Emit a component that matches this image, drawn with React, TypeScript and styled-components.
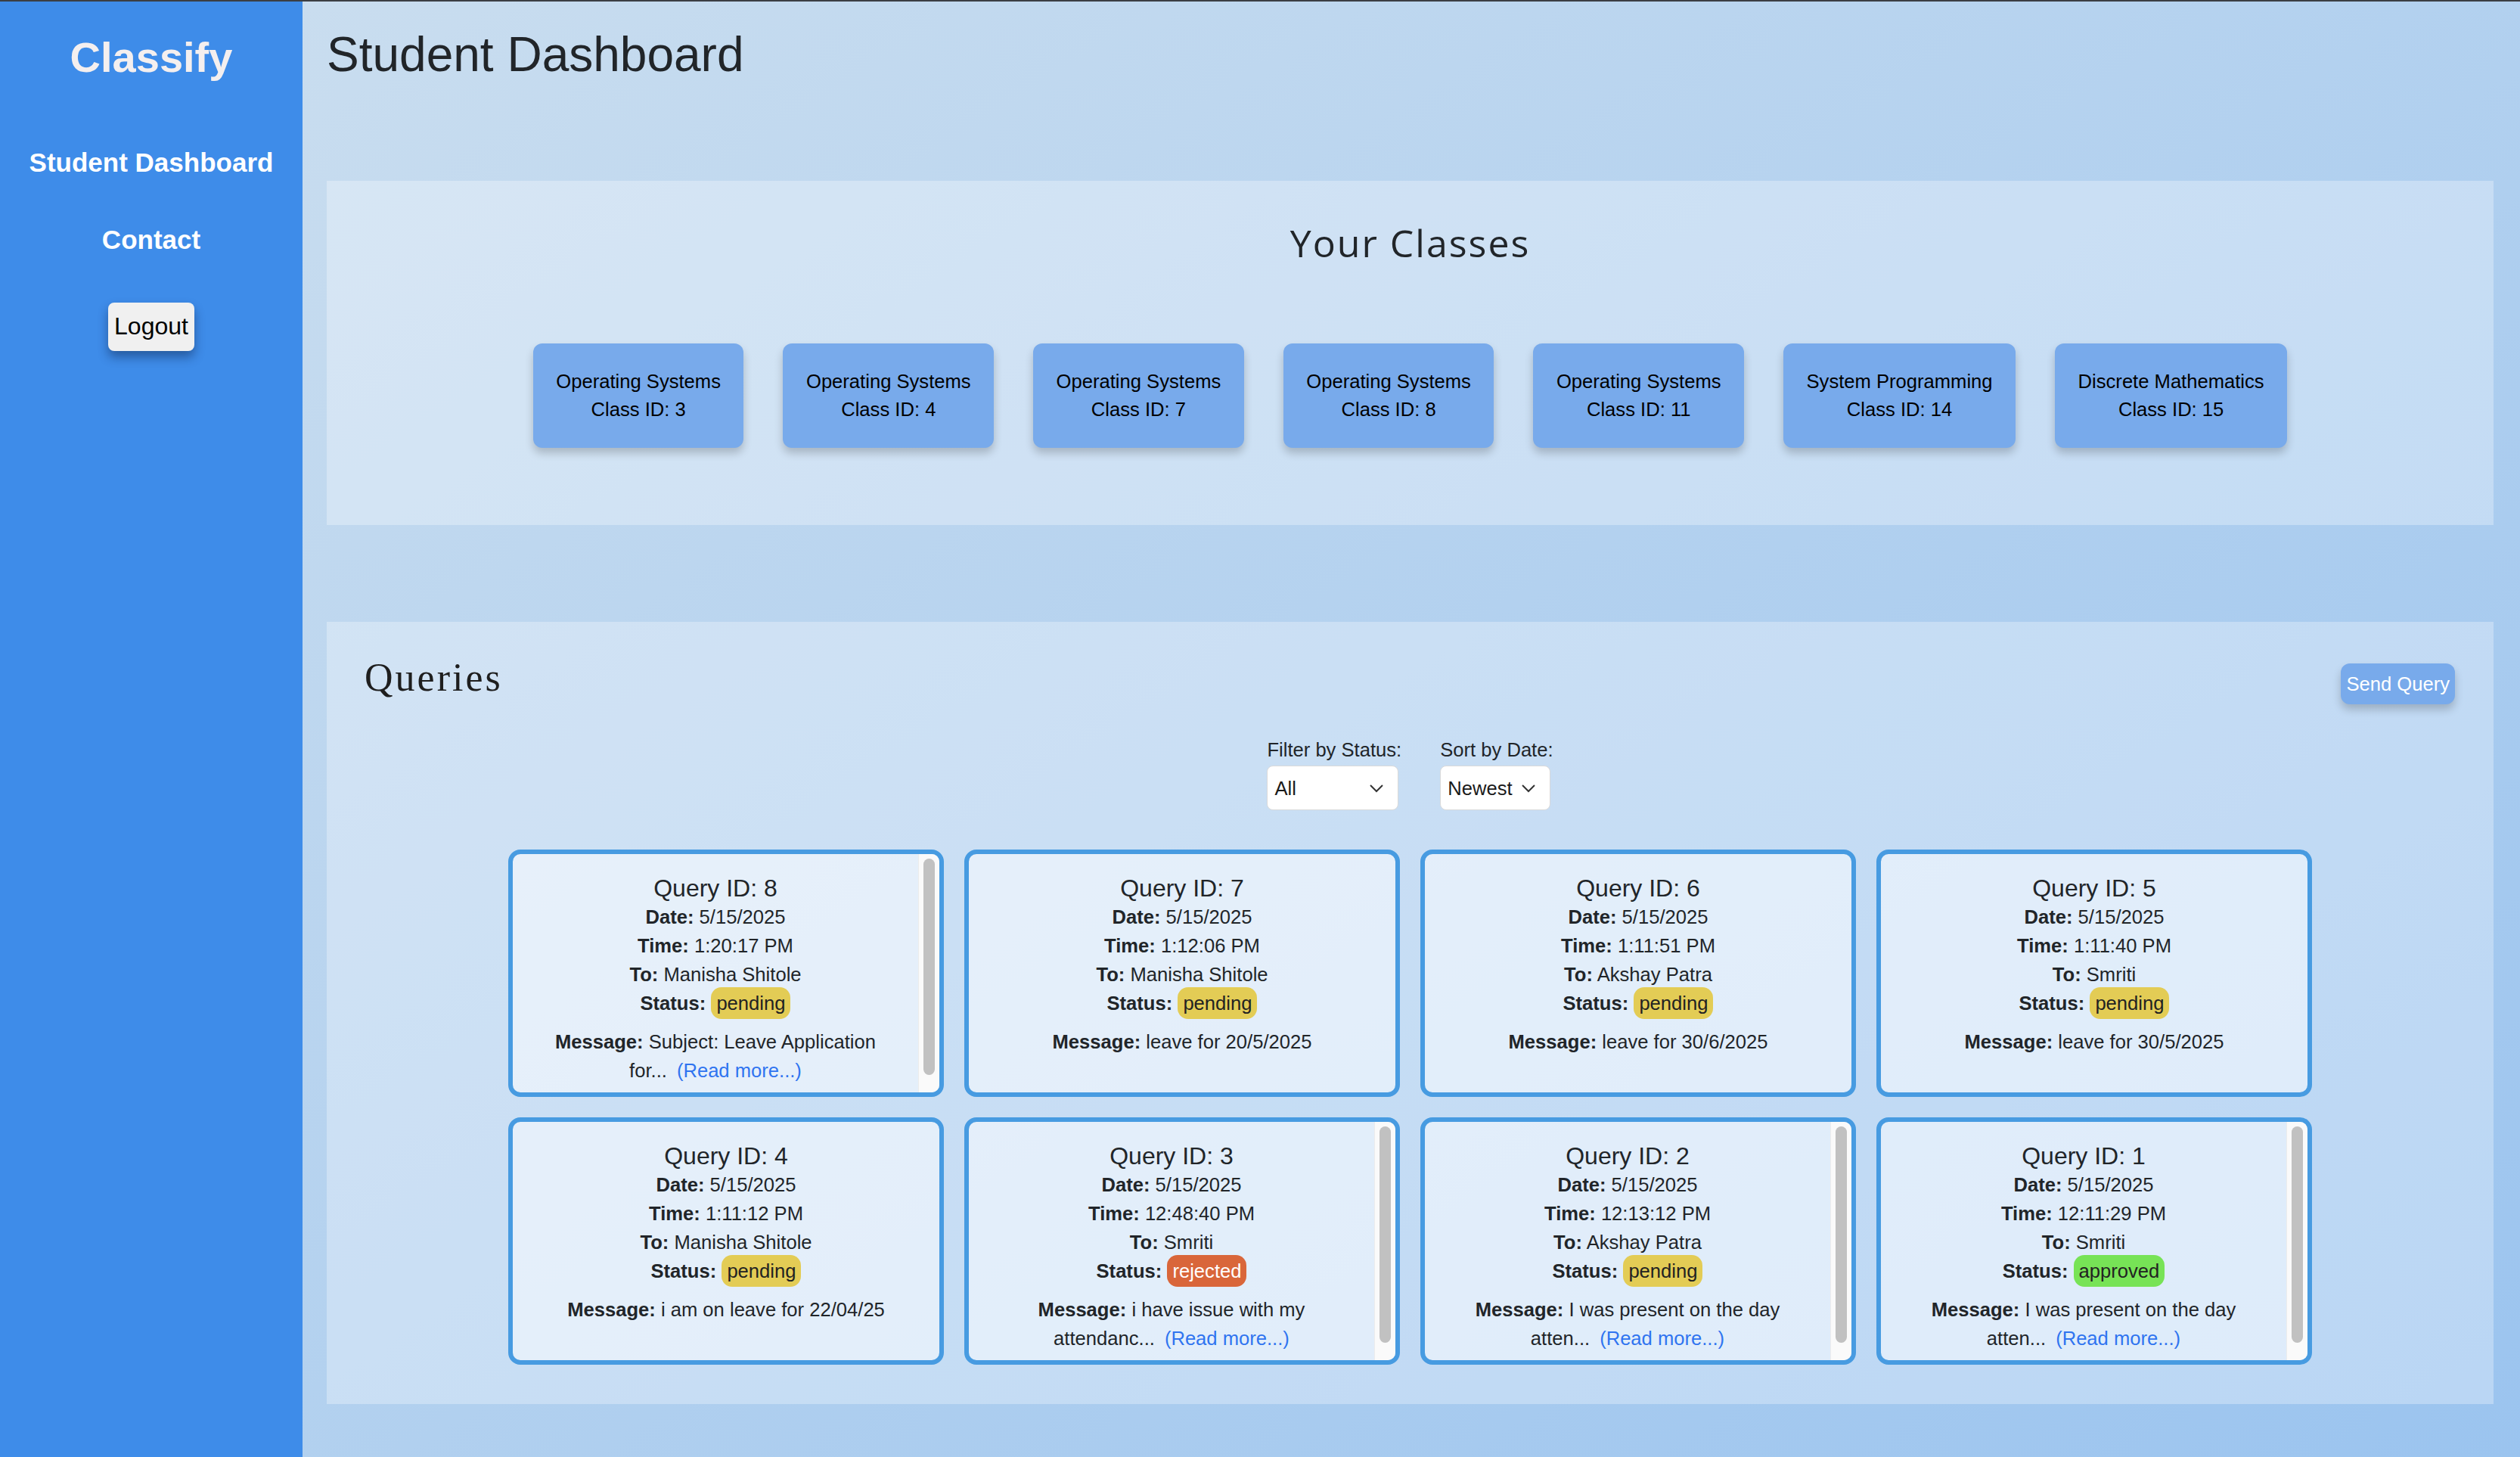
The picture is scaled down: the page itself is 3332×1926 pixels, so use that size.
import styled, { createGlobalStyle } from 'styled-components'

const GlobalStyle = createGlobalStyle`
  html, body {
    margin: 0;
    padding: 0;
  }
  body {
    font-family: "Liberation Sans", Arial, sans-serif;
    color: #212529;
  }
  * {
    box-sizing: border-box;
  }
`

const Layout = styled.div`
  display: flex;
  min-height: 100vh;
  border-top: 2px solid #3b3e43;
`

const Sidebar = styled.nav`
  width: 400px;
  flex-shrink: 0;
  background: #3e8ce9;
  display: flex;
  flex-direction: column;
  align-items: center;
  padding-top: 42px;
`

const Logo = styled.div`
  font-size: 56px;
  font-weight: 700;
  color: #f4efef;
  line-height: 64px;
  margin-bottom: 87px;
`

const NavLink = styled.a`
  font-size: 35px;
  font-weight: 700;
  color: #ffffff;
  line-height: 40px;
  margin-bottom: 62px;
  text-decoration: none;
  cursor: pointer;
`

const LogoutButton = styled.button`
  font-family: inherit;
  font-size: 32px;
  line-height: 37px;
  padding: 13px 8px 14px;
  background: #f0f0f0;
  color: #000;
  border: none;
  border-radius: 8px;
  box-shadow: 0 8px 14px rgba(10, 30, 70, 0.45);
  margin-top: 1px;
`

const Main = styled.main`
  flex: 1;
  background: linear-gradient(to bottom right, #c9ddef, #9bc4ef);
  padding: 33px 35px 40px 32px;
`

const PageTitle = styled.h1`
  font-size: 64px;
  font-weight: 400;
  line-height: 74px;
  margin: 0 0 130px;
  color: #212529;
`

const Panel = styled.section`
  background: rgba(255, 255, 255, 0.3);
`

const ClassesPanel = styled(Panel)`
  padding: 52px 50px 102px;
  margin-bottom: 128px;
`

const ClassesTitle = styled.h2`
  font-family: "Open Sans", sans-serif;
  font-size: 50px;
  font-weight: 400;
  letter-spacing: 2px;
  line-height: 60px;
  text-align: center;
  margin: 0 0 103px;
  color: #212529;
`

const ClassRow = styled.div`
  display: flex;
  justify-content: center;
  gap: 52px;
`

const ClassCard = styled.div`
  background: #78aaeb;
  border-radius: 12px;
  padding: 32px 30.5px;
  font-size: 25.6px;
  line-height: 37px;
  text-align: center;
  color: #000;
  box-shadow: 0 7px 12px rgba(0, 0, 0, 0.2);
  cursor: pointer;
`

const QueriesPanel = styled(Panel)`
  padding: 55px 50px 52px;
`

const QueriesHeader = styled.div`
  display: flex;
  justify-content: space-between;
  align-items: flex-start;
`

const QueriesTitle = styled.h2`
  font-family: "Liberation Serif", serif;
  font-size: 52px;
  font-weight: 400;
  letter-spacing: 3px;
  line-height: 38px;
  margin: 0;
  color: #1e1e1e;
`

const SendButton = styled.button`
  font-family: inherit;
  font-size: 25.6px;
  line-height: 30px;
  padding: 12px 7px;
  background: #78aaeb;
  color: #fff;
  border: none;
  border-radius: 12px;
  box-shadow: 0 7px 12px rgba(0, 0, 0, 0.2);
  margin-right: 1px;
`

const Filters = styled.div`
  display: flex;
  justify-content: center;
  gap: 51px;
  margin-top: 46px;
`

const FilterGroup = styled.label`
  display: flex;
  flex-direction: column;
  gap: 6px;
  font-size: 25.6px;
  color: #212529;
`

const SelectWrap = styled.div<{ $width: number }>`
  position: relative;
  width: ${props => props.$width}px;
`

const Select = styled.select`
  appearance: none;
  width: 100%;
  height: 59px;
  padding: 0 0 0 9px;
  font-family: inherit;
  font-size: 25.6px;
  color: #1a1a1a;
  background: #fff;
  border: 1px solid #d9d9d9;
  border-radius: 8px;
`

const Chevron = styled.svg`
  position: absolute;
  right: 19px;
  top: 24px;
  pointer-events: none;
`

const QueryGrid = styled.div`
  display: grid;
  grid-template-columns: repeat(4, 576px);
  gap: 27px;
  justify-content: center;
  margin-top: 52px;
`

const QueryCard = styled.article`
  display: flex;
  height: 327px;
  border: 6px solid #479be1;
  border-radius: 16px;
  background: rgba(255, 255, 255, 0.5);
  overflow: hidden;
  text-align: center;
  color: #212529;
`

const CardBody = styled.div`
  flex: 1;
  min-width: 0;
  overflow: hidden;
  padding: 26px 45px 26px;
`

const ScrollTrack = styled.div`
  width: 28px;
  flex-shrink: 0;
  background: #fafafa;
  border-left: 1px solid #ececec;
  padding: 6px 6px 0;
`

const ScrollThumb = styled.div`
  height: 286px;
  background: #c1c1c1;
  border-radius: 8px;
`

const QueryTitle = styled.h3`
  font-size: 32px;
  font-weight: 400;
  line-height: 38px;
  margin: 0;
`

const InfoLine = styled.p`
  font-size: 25.6px;
  line-height: 38px;
  margin: 0;
`

const MessageLine = styled(InfoLine)`
  margin-top: 13px;
`

const badgeColors: Record<string, { bg: string, fg: string }> = {
  pending: { bg: '#e3cc55', fg: '#222' },
  rejected: { bg: '#d9663a', fg: '#fff' },
  approved: { bg: '#77e356', fg: '#222' },
}

const Badge = styled.span<{ $status: string }>`
  padding: 7px 7px;
  border-radius: 14px;
  background: ${props => badgeColors[props.$status].bg};
  color: ${props => badgeColors[props.$status].fg};
`

const ReadMore = styled.a`
  color: #2f74f0;
  margin-left: 13px;
  cursor: pointer;
`

const classes = [
  { name: 'Operating Systems', id: 3 },
  { name: 'Operating Systems', id: 4 },
  { name: 'Operating Systems', id: 7 },
  { name: 'Operating Systems', id: 8 },
  { name: 'Operating Systems', id: 11 },
  { name: 'System Programming', id: 14 },
  { name: 'Discrete Mathematics', id: 15 },
]

type Query = {
  id: number
  time: string
  to: string
  status: string
  message: string
  more?: boolean
}

const queries: Query[] = [
  { id: 8, time: '1:20:17 PM', to: 'Manisha Shitole', status: 'pending', message: 'Subject: Leave Application for...', more: true },
  { id: 7, time: '1:12:06 PM', to: 'Manisha Shitole', status: 'pending', message: 'leave for 20/5/2025' },
  { id: 6, time: '1:11:51 PM', to: 'Akshay Patra', status: 'pending', message: 'leave for 30/6/2025' },
  { id: 5, time: '1:11:40 PM', to: 'Smriti', status: 'pending', message: 'leave for 30/5/2025' },
  { id: 4, time: '1:11:12 PM', to: 'Manisha Shitole', status: 'pending', message: 'i am on leave for 22/04/25' },
  { id: 3, time: '12:48:40 PM', to: 'Smriti', status: 'rejected', message: 'i have issue with my attendanc...', more: true },
  { id: 2, time: '12:13:12 PM', to: 'Akshay Patra', status: 'pending', message: 'I was present on the day atten...', more: true },
  { id: 1, time: '12:11:29 PM', to: 'Smriti', status: 'approved', message: 'I was present on the day atten...', more: true },
]

const ChevronIcon = () => (
  <Chevron width="20" height="12" viewBox="0 0 20 12">
    <polyline points="2,2 10,10 18,2" fill="none" stroke="#333" strokeWidth="2" />
  </Chevron>
)

const App = (): JSX.Element => (
  <>
    <GlobalStyle />
    <Layout>
      <Sidebar>
        <Logo>Classify</Logo>
        <NavLink>Student Dashboard</NavLink>
        <NavLink>Contact</NavLink>
        <LogoutButton>Logout</LogoutButton>
      </Sidebar>
      <Main>
        <PageTitle>Student Dashboard</PageTitle>
        <ClassesPanel>
          <ClassesTitle>Your Classes</ClassesTitle>
          <ClassRow>
            {classes.map(c => (
              <ClassCard key={c.id}>
                {c.name}
                <br />
                Class ID: {c.id}
              </ClassCard>
            ))}
          </ClassRow>
        </ClassesPanel>
        <QueriesPanel>
          <QueriesHeader>
            <QueriesTitle>Queries</QueriesTitle>
            <SendButton>Send Query</SendButton>
          </QueriesHeader>
          <Filters>
            <FilterGroup>
              Filter by Status:
              <SelectWrap $width={174}>
                <Select defaultValue="all">
                  <option value="all">All</option>
                  <option value="pending">Pending</option>
                  <option value="approved">Approved</option>
                  <option value="rejected">Rejected</option>
                </Select>
                <ChevronIcon />
              </SelectWrap>
            </FilterGroup>
            <FilterGroup>
              Sort by Date:
              <SelectWrap $width={146}>
                <Select defaultValue="newest">
                  <option value="newest">Newest</option>
                  <option value="oldest">Oldest</option>
                </Select>
                <ChevronIcon />
              </SelectWrap>
            </FilterGroup>
          </Filters>
          <QueryGrid>
            {queries.map(q => (
              <QueryCard key={q.id}>
                <CardBody>
                  <QueryTitle>Query ID: {q.id}</QueryTitle>
                  <InfoLine><strong>Date:</strong> 5/15/2025</InfoLine>
                  <InfoLine><strong>Time:</strong> {q.time}</InfoLine>
                  <InfoLine><strong>To:</strong> {q.to}</InfoLine>
                  <InfoLine>
                    <strong>Status:</strong> <Badge $status={q.status}>{q.status}</Badge>
                  </InfoLine>
                  <MessageLine>
                    <strong>Message:</strong> {q.message}
                    {q.more && <ReadMore>(Read more...)</ReadMore>}
                  </MessageLine>
                </CardBody>
                {q.more && (
                  <ScrollTrack>
                    <ScrollThumb />
                  </ScrollTrack>
                )}
              </QueryCard>
            ))}
          </QueryGrid>
        </QueriesPanel>
      </Main>
    </Layout>
  </>
)

export default App
